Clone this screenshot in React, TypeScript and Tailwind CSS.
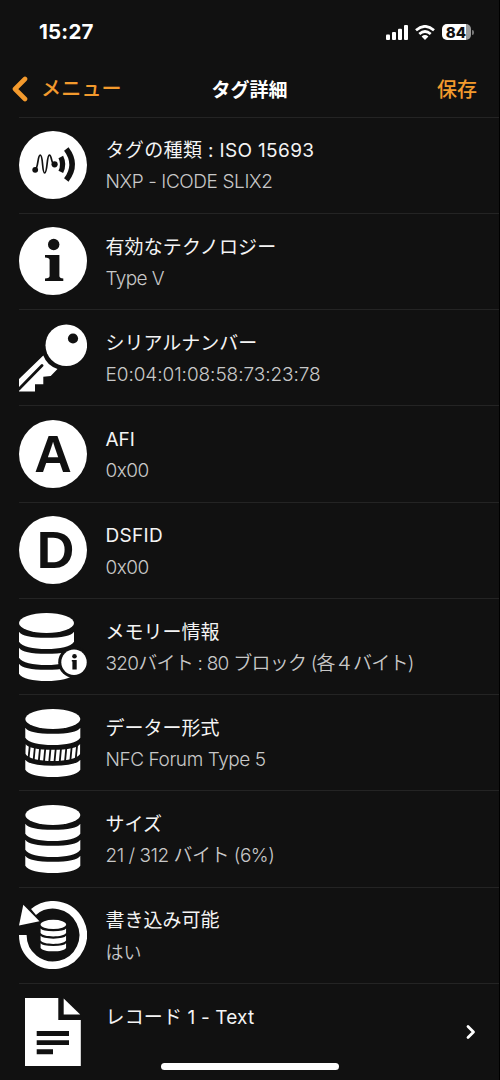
import React from 'react';

const BG = '#111111';

// 円柱の一段
const band = (y: number) =>
  `M0 ${y} Q4 ${y + 6} 27.5 ${y + 6} Q51 ${y + 6} 55 ${y} V${y + 10} C52 ${y + 14.8} 41 ${y + 17.3} 27.5 ${y + 17.3} C14 ${y + 17.3} 3 ${y + 14.8} 0 ${y + 10} Z`;

interface CylinderProps {
  striped?: boolean;
}

const Cylinder: React.FC<CylinderProps> = ({ striped }) => (
  <g fill="#fff">
    <ellipse cx="27.5" cy="10" rx="27.5" ry="10" />
    <path d={band(18.7)} />
    {striped ? (
      <>
        <clipPath id="stripe-band">
          <path d={band(34.7)} />
        </clipPath>
        <g clipPath="url(#stripe-band)" stroke="#fff" strokeWidth="3.4">
          {[0, 1, 2, 3, 4, 5, 6, 7, 8, 9, 10].map((i) => (
            <path key={i} d={`M${2.2 + i * 5.25} 33 L${0.2 + i * 5.25} 54`} />
          ))}
        </g>
      </>
    ) : (
      <path d={band(34.7)} />
    )}
    <path d={band(50.7)} />
  </g>
);

interface IconProps {
  children: React.ReactNode;
}

const Icon: React.FC<IconProps> = ({ children }) => (
  <svg className="block h-[68px] w-[68px]" viewBox="0 0 68 68" fill="none">
    {children}
  </svg>
);

const NfcIcon = () => (
  <Icon>
    <circle cx="34" cy="34" r="34" fill="#fff" />
    <circle cx="16.2" cy="38.8" r="2.9" fill={BG} />
    <circle cx="35.6" cy="33.3" r="3.1" fill={BG} />
    <path
      d="M16 39 C19.5 37 18.4 24.2 21.3 24.2 C24.2 24.2 23 42 25.6 42 C28.6 42 27.6 24.2 30.4 24.2 C33 24.2 32 34 35.8 33.3"
      stroke={BG}
      strokeWidth="1.7"
    />
    <path d="M41.8 26 Q45.5 33.3 41.8 40.8" stroke={BG} strokeWidth="5.2" />
    <path d="M47.3 18 Q59 33.5 47.3 49" stroke={BG} strokeWidth="5.6" />
  </Icon>
);

const InfoIcon = () => (
  <Icon>
    <circle cx="34" cy="34" r="34" fill="#fff" />
    <circle cx="34.7" cy="17.5" r="5.7" fill={BG} />
    <path
      d="M26 28 H40.4 V49 Q40.4 51.3 44.3 51.6 V54 H26 V51.6 Q30.6 51.3 30.6 49 V33 Q30.6 30.6 26 30.4 Z"
      fill={BG}
    />
  </Icon>
);

const KeyIcon = () => (
  <Icon>
    <path
      d="M24.3 31.5 Q28 41.5 38.5 44.9 L31.7 52 L24.3 52.8 V60.2 H16 V67.5 H0 V55 Z"
      fill="#fff"
    />
    <path d="M23 41.5 L0 65" stroke={BG} strokeWidth="2.8" strokeLinecap="round" />
    <circle cx="47.3" cy="21.3" r="20.8" fill="#fff" />
    <circle cx="54" cy="14.5" r="5.1" fill={BG} />
  </Icon>
);

const LetterIcon: React.FC<{ letter: string; shift: string }> = ({ letter, shift }) => (
  <div
    className={`flex h-[68px] w-[68px] items-center justify-center rounded-full bg-white font-['Liberation_Sans',sans-serif] text-[52px] leading-none font-bold text-[#111111] ${shift}`}
  >
    {letter}
  </div>
);

const MemoryIcon = () => (
  <Icon>
    <Cylinder />
    <circle cx="55" cy="49.2" r="15.8" fill={BG} />
    <circle cx="55" cy="49.2" r="12.7" fill="#fff" />
    <circle cx="55.5" cy="43.2" r="2.3" fill={BG} />
    <path d="M52.8 47 H57.7 V56.6 H53.4 V48.6 H52.8 Z" fill={BG} />
  </Icon>
);

const FormatIcon = () => (
  <Icon>
    <g transform="translate(6.3 0)">
      <Cylinder striped />
    </g>
  </Icon>
);

const SizeIcon = () => (
  <Icon>
    <g transform="translate(6.3 0)">
      <Cylinder />
    </g>
  </Icon>
);

const WritableIcon = () => (
  <Icon>
    <path d="M3.8 34 A30.2 30.2 0 1 0 14.5 11" stroke="#fff" strokeWidth="7.6" />
    <path d="M4.3 3.7 L0 24.5 L20.5 20.3 Z" fill="#fff" />
    <g transform="translate(21.6 18.8) scale(0.463)">
      <Cylinder />
    </g>
  </Icon>
);

const RecordIcon = () => (
  <Icon>
    <path d="M6 0 H39.3 V22 H61.8 V68 H6 Z" fill="#fff" />
    <path d="M44.7 0.5 L61.2 16.5 H44.7 Z" fill="#fff" />
    <path d="M17.7 35.5 H50 M17.7 44.6 H50 M17.7 53.8 H34" stroke={BG} strokeWidth="4.9" />
  </Icon>
);

interface Row {
  icon: React.ReactNode;
  title: string;
  value?: string;
  titleClass?: string;
  valueClass?: string;
  link?: boolean;
}

const rows: Row[] = [
  {
    icon: <NfcIcon />,
    title: 'タグの種類 : ISO 15693',
    value: 'NXP - ICODE SLIX2',
    titleClass: 'tracking-[0.35px]',
    valueClass: 'text-[19px] tracking-[-0.4px]',
  },
  {
    icon: <InfoIcon />,
    title: '有効なテクノロジー',
    value: 'Type V',
    titleClass: 'tracking-[0.1px]',
    valueClass: 'text-[19px] tracking-[-0.6px]',
  },
  {
    icon: <KeyIcon />,
    title: 'シリアルナンバー',
    value: 'E0:04:01:08:58:73:23:78',
    valueClass: 'text-[19px] tracking-[-0.07px]',
  },
  {
    icon: <LetterIcon letter="A" shift="" />,
    title: 'AFI',
    value: '0x00',
    valueClass: 'text-[19px] tracking-[-0.5px]',
  },
  {
    icon: <LetterIcon letter="D" shift="pl-[5px]" />,
    title: 'DSFID',
    value: '0x00',
    titleClass: 'tracking-[0.3px]',
    valueClass: 'text-[19px] tracking-[-0.5px]',
  },
  {
    icon: <MemoryIcon />,
    title: 'メモリー情報',
    value: '320バイト : 80 ブロック (各４バイト)',
    valueClass: 'text-[19px] tracking-[-0.75px]',
  },
  {
    icon: <FormatIcon />,
    title: 'データー形式',
    value: 'NFC Forum Type 5',
    valueClass: 'text-[19px] tracking-[-0.42px]',
  },
  {
    icon: <SizeIcon />,
    title: 'サイズ',
    value: '21 / 312 バイト (6%)',
    valueClass: 'text-[19px] tracking-[-0.5px]',
  },
  { icon: <WritableIcon />, title: '書き込み可能', value: 'はい', valueClass: 'text-[18px]' },
  { icon: <RecordIcon />, title: 'レコード 1 - Text', titleClass: 'tracking-[0.15px]', link: true },
];

const StatusBar = () => (
  <div className="flex h-[64px] items-center justify-between pr-[25px] pl-[39px]">
    <span className="pt-[1px] text-[20.5px] leading-none font-bold tracking-[0.2px]">15:27</span>
    <div className="flex items-center gap-[7px]">
      <svg className="h-[15px] w-[22px]" viewBox="0 0 22 15" fill="#fff">
        <rect x="0" y="9.5" width="4" height="5.5" rx="1" />
        <rect x="6" y="7" width="4" height="8" rx="1" />
        <rect x="12" y="3.8" width="4" height="11.2" rx="1" />
        <rect x="18" y="0" width="4" height="15" rx="1" />
      </svg>
      <svg className="h-[15px] w-[20px]" viewBox="0 0 20 15" fill="none" stroke="#fff" strokeWidth="2.7">
        <path d="M1 5.3 Q10 -2.6 19 5.3" />
        <path d="M4.3 9 Q10 4 15.7 9" />
        <path d="M10 15 L6.6 11.5 Q10 8.6 13.4 11.5 Z" fill="#fff" stroke="none" />
      </svg>
      <div className="flex items-center gap-[1px]">
        <div className="flex h-[16.5px] w-[29px] items-center justify-center rounded-[5px] bg-linear-to-r from-white from-84% to-[#9b9b9b] to-84% pr-[1px] text-[15px] leading-none font-extrabold text-[#111111]">
          84
        </div>
        <div className="h-[5px] w-[2px] rounded-r-full bg-[#777777]" />
      </div>
    </div>
  </div>
);

const NavBar = () => (
  <div className="grid h-[52.6px] grid-cols-3 items-center pr-[22px] pb-[3px] pl-[11px] text-[20px] leading-none font-medium">
    <div className="flex items-center gap-[13px] text-[#f39a2d]">
      <svg className="h-[26px] w-[17px]" viewBox="0 0 17 26" fill="none">
        <path d="M14 3 L4 13 L14 23" stroke="currentColor" strokeWidth="4.6" strokeLinecap="round" strokeLinejoin="round" />
      </svg>
      <span className="pt-[1px] tracking-[0.2px]">メニュー</span>
    </div>
    <div className="pt-[3px] pl-[11px] text-center text-[19px] font-bold">タグ詳細</div>
    <div className="pt-[2px] text-right text-[#f39a2d]">保存</div>
  </div>
);

export default function App() {
  return (
    <div className="relative h-[1080px] w-[500px] overflow-hidden border-r border-black bg-[#111111] font-['Inter','Noto_Sans_CJK_JP',sans-serif] text-white">
      <StatusBar />
      <NavBar />
      <div>
        {rows.map((row) => (
          <div key={row.title} className="ml-[19px] flex h-[96.28px] items-center border-t border-[#242424]">
            <div className="w-[68px] shrink-0">{row.icon}</div>
            <div className="ml-[18.5px] h-full flex-1 pt-[17.7px] leading-[31.2px] whitespace-nowrap">
              <div className={`h-[31.2px] text-[19px] text-[#f4f4f4] ${row.titleClass ?? ''}`}>{row.title}</div>
              {row.value && (
                <div className={`h-[31.2px] font-[350] text-[#c8c8c8] ${row.valueClass ?? ''}`}>{row.value}</div>
              )}
            </div>
            {row.link && (
              <svg className="mr-[22px] h-[16px] w-[12px]" viewBox="0 0 12 16" fill="none">
                <path d="M3 2.5 L8.5 8 L3 13.5" stroke="#fff" strokeWidth="2.8" strokeLinecap="round" strokeLinejoin="round" />
              </svg>
            )}
          </div>
        ))}
      </div>
      {/* ホームインジケーター */}
      <div className="absolute bottom-[10px] left-[161px] h-[7px] w-[178px] rounded-full bg-white" />
    </div>
  );
}
